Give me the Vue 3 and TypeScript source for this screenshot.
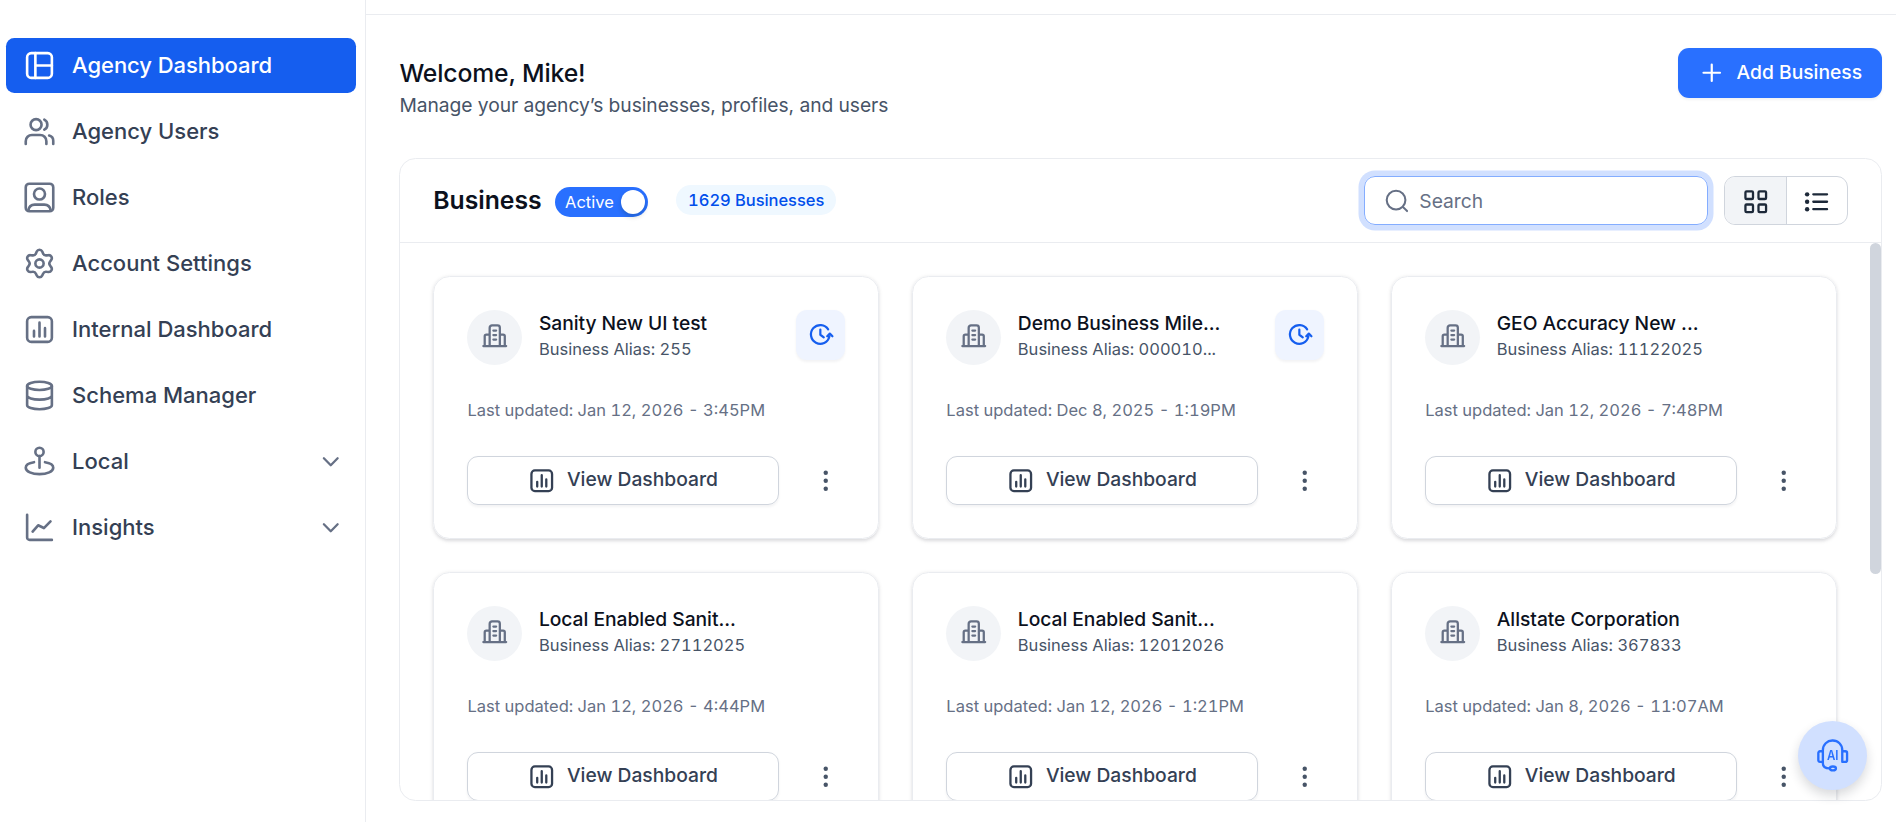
<script setup lang="ts">
import { ref } from 'vue'

interface NavItem {
  label: string
  icon: string
  expandable?: boolean
}

interface Business {
  name: string
  alias: string
  updated: string
  pending?: boolean
}

const navItems: NavItem[] = [
  { label: 'Agency Dashboard', icon: 'layout' },
  { label: 'Agency Users', icon: 'users' },
  { label: 'Roles', icon: 'role' },
  { label: 'Account Settings', icon: 'settings' },
  { label: 'Internal Dashboard', icon: 'chart' },
  { label: 'Schema Manager', icon: 'database' },
  { label: 'Local', icon: 'pin', expandable: true },
  { label: 'Insights', icon: 'trend', expandable: true },
]

const businesses: Business[] = [
  { name: 'Sanity New UI test', alias: '255', updated: 'Jan 12, 2026 - 3:45PM', pending: true },
  { name: 'Demo Business Mile...', alias: '000010...', updated: 'Dec 8, 2025 - 1:19PM', pending: true },
  { name: 'GEO Accuracy New ...', alias: '11122025', updated: 'Jan 12, 2026 - 7:48PM' },
  { name: 'Local Enabled Sanit...', alias: '27112025', updated: 'Jan 12, 2026 - 4:44PM' },
  { name: 'Local Enabled Sanit...', alias: '12012026', updated: 'Jan 12, 2026 - 1:21PM' },
  { name: 'Allstate Corporation', alias: '367833', updated: 'Jan 8, 2026 - 11:07AM' },
]

const activeNav = ref('Agency Dashboard')
const view = ref<'grid' | 'list'>('grid')
const query = ref('')
</script>

<template>
  <div class="app">
    <nav class="sidebar">
      <a
        v-for="item in navItems"
        :key="item.label"
        class="nav-item"
        :class="{ active: item.label === activeNav }"
        @click="activeNav = item.label"
      >
        <svg class="nav-icon" viewBox="0 0 24 24">
          <template v-if="item.icon === 'layout'">
            <rect x="3" y="3" width="18" height="18" rx="3" />
            <path d="M9 3v18M9 12h12" />
          </template>
          <template v-else-if="item.icon === 'users'">
            <circle cx="9.5" cy="7" r="4" />
            <path d="M2 21v-2a4.500 4.500 0 0 1 4.500-4.500h6a4.500 4.500 0 0 1 4.500 4.500v2M15.500 3.300a4.200 4.200 0 0 1 0 7.400M19 14.900a4 4 0 0 1 3 3.900V21" />
          </template>
          <template v-else-if="item.icon === 'role'">
            <rect x="2" y="2" width="20" height="20" rx="2.600" />
            <circle cx="12" cy="9.500" r="4" />
            <path d="M3.900 21.400c.400-2.700 2-4.200 4.600-4.200h7c2.600 0 4.200 1.500 4.600 4.200" />
          </template>
          <template v-else-if="item.icon === 'settings'">
            <circle cx="12" cy="12" r="3" />
            <path d="M9.400 19.400l.600 1.300a2.200 2.200 0 0 0 4 0l.600-1.300a2.400 2.400 0 0 1 2.500-1.400l1.400.150a2.200 2.200 0 0 0 2-3.500l-.800-1.150a2.400 2.400 0 0 1 0-2.900l.800-1.150a2.200 2.200 0 0 0-2-3.500l-1.400.150a2.400 2.400 0 0 1-2.500-1.400L14 3.300a2.200 2.200 0 0 0-4 0l-.600 1.400a2.400 2.400 0 0 1-2.500 1.400l-1.400-.150a2.200 2.200 0 0 0-2 3.500l.800 1.150a2.400 2.400 0 0 1 0 2.900l-.800 1.150a2.200 2.200 0 0 0 2 3.500l1.400-.150a2.400 2.400 0 0 1 2.500 1.400z" />
          </template>
          <template v-else-if="item.icon === 'chart'">
            <rect x="3" y="3" width="18" height="18" rx="3" />
            <path d="M8 13v4M12 7v10M16 11v6" />
          </template>
          <template v-else-if="item.icon === 'database'">
            <ellipse cx="12" cy="5" rx="9" ry="3" />
            <path d="M3 5v14c0 1.660 4 3 9 3s9-1.340 9-3V5M3 12c0 1.660 4 3 9 3s9-1.340 9-3" />
          </template>
          <template v-else-if="item.icon === 'pin'">
            <circle cx="12" cy="5" r="3" />
            <path d="M12 8v8.500M8 12.500c-3.500.500-6 1.900-6 4C2 19.300 6.500 21.200 12 21.200s10-1.900 10-4.700c0-2.100-2.500-3.500-6-4" />
          </template>
          <template v-else>
            <path d="M3 2.700V19.200a1.800 1.800 0 0 0 1.800 1.800H21M7 15l4-4.600 4.200 2L20 7.500" />
          </template>
        </svg>
        <span class="nav-label">{{ item.label }}</span>
        <svg v-if="item.expandable" class="chevron" viewBox="0 0 20 20"><path d="M5 7.500l5 5 5-5" /></svg>
      </a>
    </nav>

    <main class="main">
      <div class="topbar"></div>
      <header class="page-head">
        <div class="titles">
          <h1>Welcome, Mike!</h1>
          <p>Manage your agency’s businesses, profiles, and users</p>
        </div>
        <button class="add-btn">
          <svg viewBox="0 0 20 20"><path d="M10 4v12M4 10h12" /></svg>
          <span>Add Business</span>
        </button>
      </header>

      <section class="panel">
        <div class="panel-head">
          <h2>Business</h2>
          <div class="switch"><span>Active</span><i></i></div>
          <span class="count">1629 Businesses</span>
          <label class="search">
            <svg viewBox="0 0 20 20"><circle cx="9.500" cy="9.500" r="6.800" /><path d="M15 15l2.500 2.500" /></svg>
            <input v-model="query" type="text" placeholder="Search" />
          </label>
          <div class="view-toggle">
            <button :class="{ on: view === 'grid' }" @click="view = 'grid'">
              <svg viewBox="0 0 20 20">
                <rect x="2.500" y="2.500" width="5.500" height="5.500" rx=".8" />
                <rect x="12" y="2.500" width="5.500" height="5.500" rx=".8" />
                <rect x="2.500" y="12" width="5.500" height="5.500" rx=".8" />
                <rect x="12" y="12" width="5.500" height="5.500" rx=".8" />
              </svg>
            </button>
            <button :class="{ on: view === 'list' }" @click="view = 'list'">
              <svg viewBox="0 0 20 20">
                <path d="M7.500 4.600h10M7.500 10h10M7.500 15.400h10" />
                <g class="bullets">
                  <circle cx="3" cy="4.600" r="1.600" /><circle cx="3" cy="10" r="1.600" /><circle cx="3" cy="15.400" r="1.600" />
                </g>
              </svg>
            </button>
          </div>
        </div>

        <div class="panel-body">
          <div class="grid">
            <article v-for="(b, i) in businesses" :key="i" class="card">
              <div class="card-top">
                <div class="avatar">
                  <svg viewBox="0 0 20 20">
                    <path d="M1.700 17.500h16.600M6.300 17.500V4.200a1.700 1.700 0 0 1 1.700-1.700h4a1.700 1.700 0 0 1 1.700 1.700v13.300M6.300 9.200H3.900a1.200 1.200 0 0 0-1.200 1.200v7.100M13.700 9.200h2.400a1.200 1.200 0 0 1 1.200 1.200v7.100M9 6.200h2M9 9.500h2M9 12.800h2" />
                  </svg>
                </div>
                <div class="card-text">
                  <h3>{{ b.name }}</h3>
                  <p>Business Alias: {{ b.alias }}</p>
                </div>
                <button v-if="b.pending" class="clock-btn">
                  <svg viewBox="0 0 20 20">
                    <path d="M15.400 6.100A6.800 6.800 0 1 0 16.300 11.300M14.700 11.100l1.900-1.900 1.900 1.900M9.700 6.200V10l2.500 1.900" />
                  </svg>
                </button>
              </div>
              <p class="updated">Last updated: {{ b.updated }}</p>
              <div class="card-actions">
                <button class="view-btn">
                  <svg viewBox="0 0 20 20">
                    <rect x="2.500" y="2.500" width="15" height="15" rx="2.500" />
                    <path d="M6.700 10.800v3.400M10 6v8.200M13.300 9v5.200" />
                  </svg>
                  <span>View Dashboard</span>
                </button>
                <button class="more-btn">
                  <svg viewBox="0 0 20 20"><circle cx="10" cy="4.200" r="1.600" /><circle cx="10" cy="10" r="1.600" /><circle cx="10" cy="15.800" r="1.600" /></svg>
                </button>
              </div>
            </article>
          </div>
          <div class="scroll-thumb"></div>
        </div>
      </section>
    </main>

    <button class="assistant">
      <svg viewBox="0 0 24 24">
        <path d="M5 8.800V8A6.900 6.900 0 0 1 12 1.100h.200A6.900 6.900 0 0 1 19.100 8v8.600M5 8.800v9c0 2 1.700 3.500 5 3.600M5 8.900H2.900A1.200 1.200 0 0 0 1.700 10.100v5.300A1.200 1.200 0 0 0 2.900 16.600H5M19.100 8.900h2.300a1.200 1.200 0 0 1 1.200 1.200v5.300a1.200 1.200 0 0 1-1.200 1.200h-2.300" />
        <ellipse cx="12.300" cy="21.400" rx="2.200" ry="1.400" />
        <text x="8" y="15.300" textLength="8.400" lengthAdjust="spacingAndGlyphs">AI</text>
      </svg>
    </button>
  </div>
</template>

<style>
body {
  margin: 0;
  overflow: hidden;
  background: #fff;
}
</style>

<style scoped>
.app {
  zoom: 1.375;
  display: flex;
  width: 1378.9px;
  height: 597.8px;
  overflow: hidden;
  font-family: Inter, 'Liberation Sans', sans-serif;
  color: #0c111d;
  background: #fff;
}
.app * {
  box-sizing: border-box;
}
svg {
  display: block;
  flex: none;
  fill: none;
  stroke: currentColor;
  stroke-linecap: round;
  stroke-linejoin: round;
}
button {
  font: inherit;
  color: inherit;
  padding: 0;
  border: 0;
  background: none;
}
h1, h2, h3, p {
  margin: 0;
}

.sidebar {
  flex: none;
  display: flex;
  flex-direction: column;
  gap: 8px;
  width: 266px;
  padding: 27.6px 6.500px 0 4.400px;
  border-right: 1px solid #eaecf0;
}
.nav-item {
  display: flex;
  align-items: center;
  height: 40px;
  padding: 0 8.500px 0 12px;
  border-radius: 6px;
  color: #344054;
}
.nav-icon {
  width: 24px;
  height: 24px;
  stroke-width: 1.900;
  color: #667085;
}
.nav-label {
  flex: 1;
  margin-left: 12px;
  font-size: 16px;
  font-weight: 500;
  line-height: 24px;
}
.nav-item.active {
  color: #fff;
  background: #155eef;
}
.nav-item.active .nav-icon {
  color: #fff;
}
.nav-item.active .nav-label {
  letter-spacing: -0.030px;
}
.chevron {
  width: 20px;
  height: 20px;
  stroke-width: 1.670;
  color: #667085;
}

.main {
  flex: 1;
  min-width: 0;
  display: flex;
  flex-direction: column;
  padding-bottom: 15.300px;
}
.topbar {
  flex: none;
  height: 10.900px;
  border-bottom: 1px solid #eaecf0;
}
.page-head {
  flex: none;
  display: flex;
  justify-content: space-between;
  height: 104.200px;
  padding: 24px 10.300px 0 24.500px;
}
h1 {
  margin-top: 4.700px;
  font-size: 18px;
  font-weight: 500;
  letter-spacing: -0.110px;
  line-height: 28px;
}
.titles p {
  margin-top: -0.700px;
  font-size: 14px;
  letter-spacing: -0.050px;
  line-height: 20px;
  color: #475467;
}
.add-btn {
  display: flex;
  align-items: center;
  justify-content: center;
  gap: 8px;
  width: 148px;
  height: 36.300px;
  border-radius: 8px;
  background: #2970ff;
  color: #fff;
  font-size: 14px;
  font-weight: 500;
  line-height: 20px;
  box-shadow: 0 1px 2px rgba(16, 24, 40, 0.05);
}
.add-btn span {
  margin-top: -1px;
}
.add-btn svg {
  width: 20px;
  height: 20px;
  stroke-width: 1.600;
}

.panel {
  flex: 1;
  min-height: 0;
  display: flex;
  flex-direction: column;
  margin: 0 10.300px 0 24.300px;
  border: 1px solid #eaecf0;
  border-radius: 12px;
  overflow: hidden;
}
.panel-head {
  flex: none;
  display: flex;
  align-items: center;
  height: 61px;
  padding: 0 23.700px 0 24px;
  border-bottom: 1px solid #eaecf0;
}
h2 {
  font-size: 18px;
  font-weight: 600;
  line-height: 28px;
}
.switch {
  display: flex;
  align-items: center;
  justify-content: space-between;
  width: 67.500px;
  height: 22px;
  margin: 2px 0 0 10px;
  padding: 0 2px 0 7px;
  border-radius: 11px;
  background: #2970ff;
  color: #fff;
  font-size: 12px;
}
.switch i {
  width: 18px;
  height: 18px;
  border-radius: 50%;
  background: #fff;
  box-shadow: 0 2px 4px rgba(0, 35, 11, 0.2);
}
.count {
  margin-left: 20.500px;
  margin-top: -1px;
  padding: 2px 8.500px;
  border-radius: 11px;
  background: #eff8ff;
  color: #004eeb;
  font-size: 12px;
  font-weight: 500;
  letter-spacing: -0.040px;
  line-height: 18px;
  font-variant-numeric: tabular-nums;
}
.search {
  display: flex;
  align-items: center;
  gap: 6.500px;
  width: 250px;
  height: 36px;
  margin-left: auto;
  padding: 0 13px;
  border: 1px solid #84adff;
  border-radius: 8px;
  box-shadow: 0 0 0 4px #d1e0ff;
}
.search svg {
  width: 20px;
  height: 20px;
  stroke-width: 1.500;
  color: #667085;
}
.search input {
  flex: 1;
  min-width: 0;
  padding: 0;
  border: 0;
  outline: none;
  background: none;
  font: inherit;
  font-size: 14px;
  color: #101828;
}
.search input::placeholder {
  color: #667085;
}
.view-toggle {
  display: flex;
  width: 90.200px;
  height: 36px;
  margin-left: 12px;
  border: 1px solid #d0d5dd;
  border-radius: 8px;
  overflow: hidden;
  color: #1d2939;
}
.view-toggle button {
  flex: 1;
  display: flex;
  align-items: center;
  justify-content: center;
}
.view-toggle button + button {
  border-left: 1px solid #d0d5dd;
}
.view-toggle .on {
  background: #f2f4f7;
}
.view-toggle svg {
  width: 20px;
  height: 20px;
  margin-top: 1px;
  stroke-width: 1.670;
}
.bullets {
  fill: currentColor;
  stroke: none;
}

.panel-body {
  flex: 1;
  min-height: 0;
  display: flex;
  justify-content: space-between;
}
.grid {
  display: grid;
  grid-template-columns: repeat(3, 324.400px);
  grid-auto-rows: 191px;
  gap: 24.300px 23.900px;
  padding: 24px;
}
.scroll-thumb {
  width: 8px;
  height: 240.500px;
  border-radius: 4px;
  background: #d0d5dd;
}
.card {
  padding: 24px 24px 24px 23.900px;
  border: 1px solid #eaecf0;
  border-radius: 12px;
  box-shadow: 0 1px 3px rgba(16, 24, 40, 0.1), 0 1px 2px rgba(16, 24, 40, 0.06);
}
.card-top {
  display: flex;
  height: 40px;
}
.avatar {
  flex: none;
  display: flex;
  align-items: center;
  justify-content: center;
  width: 40px;
  height: 40px;
  border-radius: 50%;
  background: #f2f4f7;
  color: #667085;
}
.avatar svg {
  width: 20px;
  height: 20px;
  margin-top: -3px;
  stroke-width: 1.650;
}
.card-text {
  flex: 1;
  margin-left: 12.300px;
}
h3 {
  font-size: 14px;
  font-weight: 500;
  letter-spacing: -0.030px;
  line-height: 20px;
}
.card-text p {
  margin-top: -0.300px;
  font-size: 12px;
  line-height: 18px;
  color: #475467;
  font-variant-numeric: tabular-nums;
}
.clock-btn {
  display: flex;
  align-items: center;
  justify-content: center;
  width: 36px;
  height: 36px;
  border-radius: 8px;
  background: #eff4ff;
  color: #155eef;
  box-shadow: 0 1px 2px rgba(16, 24, 40, 0.05);
}
.clock-btn svg {
  width: 20px;
  height: 20px;
  stroke-width: 1.600;
}
.updated {
  margin: 23.700px 0 0 0.300px;
  font-size: 12px;
  line-height: 18px;
  color: #667085;
  font-variant-numeric: tabular-nums;
}
.card-actions {
  display: flex;
  align-items: center;
  margin-top: 24.200px;
}
.view-btn {
  display: flex;
  align-items: center;
  justify-content: center;
  gap: 8.200px;
  width: 227px;
  height: 36px;
  border: 1px solid #d0d5dd;
  border-radius: 8px;
  color: #344054;
  font-size: 14px;
  font-weight: 500;
  line-height: 20px;
  box-shadow: 0 1px 2px rgba(16, 24, 40, 0.05);
}
.view-btn span {
  margin-top: -0.800px;
}
.view-btn svg {
  width: 20px;
  height: 20px;
  stroke-width: 1.670;
}
.more-btn {
  margin-left: 24px;
  color: #475467;
}
.more-btn svg {
  width: 20px;
  height: 20px;
  fill: currentColor;
  stroke: none;
}

.assistant {
  position: fixed;
  right: 21px;
  bottom: 23.500px;
  display: flex;
  align-items: center;
  justify-content: center;
  width: 50px;
  height: 50px;
  border-radius: 50%;
  background: #d1e0ff;
  color: #2970ff;
  box-shadow: 0 4px 8px rgba(16, 24, 40, 0.16);
}
.assistant svg {
  width: 24px;
  height: 24px;
  stroke-width: 1.700;
}
.assistant text {
  fill: currentColor;
  stroke: none;
  font-size: 9.600px;
  font-weight: 600;
}
</style>
